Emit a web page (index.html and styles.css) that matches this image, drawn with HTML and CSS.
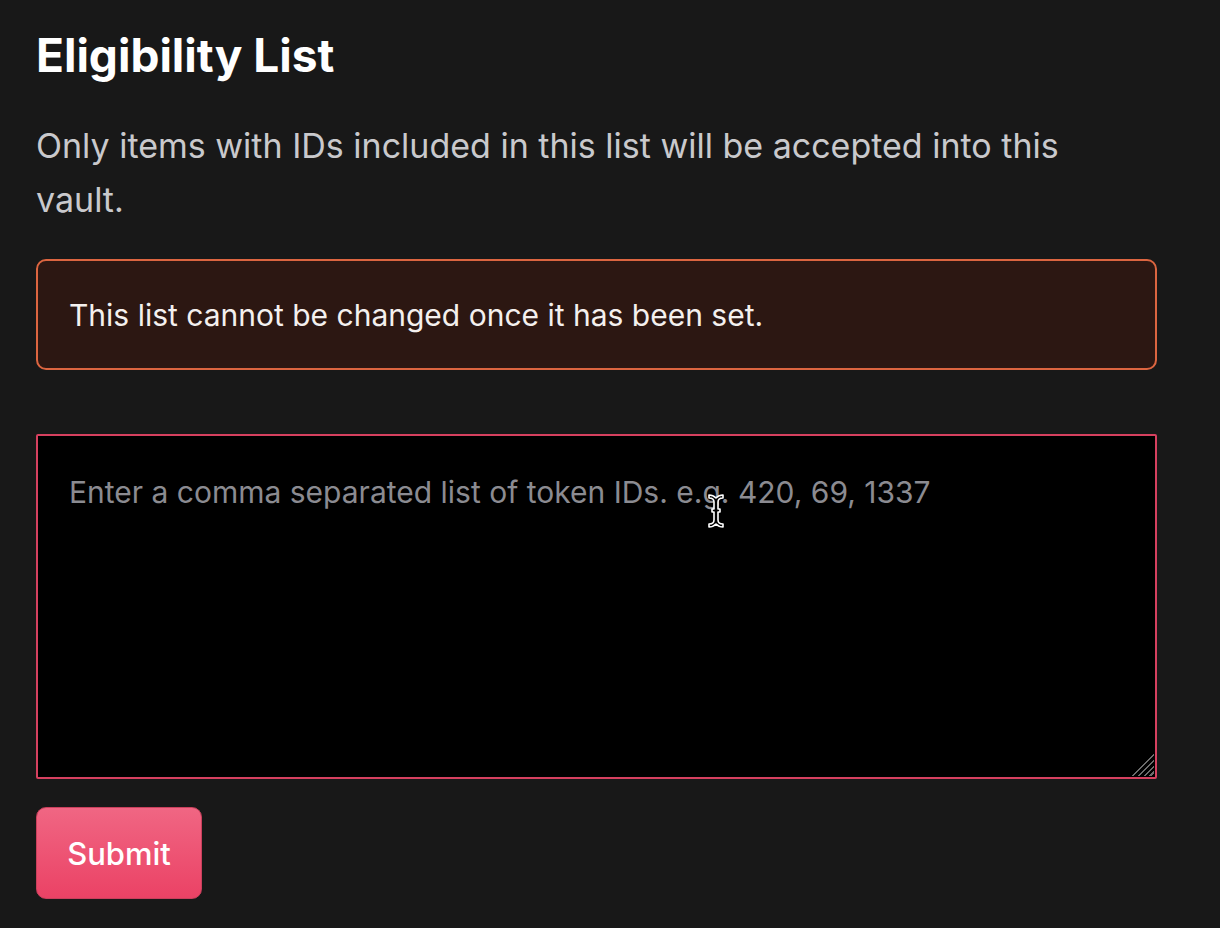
FILE: index.html
```html
<!DOCTYPE html>
<html lang="en">
<head>
<meta charset="utf-8">
<title>Eligibility List</title>
<link rel="stylesheet" href="styles.css">
</head>
<body>
<main class="page">
  <h1 class="title">Eligibility List</h1>
  <p class="lead">Only items with IDs included in this list will be accepted into this vault.</p>
  <div class="alert">This list cannot be changed once it has been set.</div>
  <div class="field">
    <textarea class="ids" placeholder="Enter a comma separated list of token IDs. e.g. 420, 69, 1337"></textarea>
    <svg class="cursor" width="20" height="36" viewBox="0 0 20 36" aria-hidden="true">
      <path d="M3 2 Q7 2 10 5 Q13 2 17 2 L17 5 Q12 5 12 9 L12 16 L14 16 L14 19 L12 19 L12 27 Q12 31 17 31 L17 34 Q13 34 10 31 Q7 34 3 34 L3 31 Q8 31 8 27 L8 19 L6 19 L6 16 L8 16 L8 9 Q8 5 3 5 Z" fill="#000" stroke="#fff" stroke-width="1.6" stroke-linejoin="round"/>
    </svg>
  </div>
  <button class="submit" type="button">Submit</button>
</main>
</body>
</html>
```
FILE: styles.css
```css
html, body {
  margin: 0;
  padding: 0;
  background: #181818;
}
body {
  font-family: Inter, "Noto Sans", sans-serif;
  color: #fff;
}
.page {
  width: 1121px;
  padding: 26px 0 0 36px;
}
.title {
  margin: 0;
  font-size: 46px;
  line-height: 58px;
  font-weight: 700;
}
.lead {
  max-width: 1080px;
  margin: 35px 0 0;
  font-size: 34px;
  line-height: 54px;
  color: #c9c9cc;
}
.alert {
  margin-top: 32px;
  box-sizing: border-box;
  height: 111px;
  display: flex;
  align-items: center;
  padding: 0 31px;
  border: 2px solid #dc6540;
  border-radius: 10px;
  background: #2c1712;
  font-size: 30px;
  color: #f4f0ee;
}
.field {
  position: relative;
  margin-top: 64px;
}
.field::after {
  content: "";
  position: absolute;
  right: 3px;
  bottom: 3px;
  width: 25px;
  height: 25px;
  background: repeating-linear-gradient(135deg, transparent 0 2.4px, #6c6c6c 2.4px 4.2px);
  clip-path: polygon(100% 0, 100% 100%, 0 100%);
  pointer-events: none;
}
.ids {
  display: block;
  box-sizing: border-box;
  width: 100%;
  height: 345px;
  margin: 0;
  padding: 36px 31px;
  border: 2px solid #d6405f;
  border-radius: 2px;
  background: #000;
  color: #fff;
  font-family: inherit;
  font-size: 30px;
  line-height: 40px;
  outline: none;
  resize: none;
}
.ids::placeholder {
  color: #8b8b91;
}
.cursor {
  position: absolute;
  left: 670px;
  top: 59px;
}
.submit {
  display: block;
  margin-top: 28px;
  width: 166px;
  height: 92px;
  border: 1px solid #c9405c;
  border-radius: 10px;
  background: linear-gradient(#f06683, #eb4265);
  color: #fff;
  font-family: inherit;
  font-size: 31px;
  font-weight: 500;
  cursor: pointer;
}
```
